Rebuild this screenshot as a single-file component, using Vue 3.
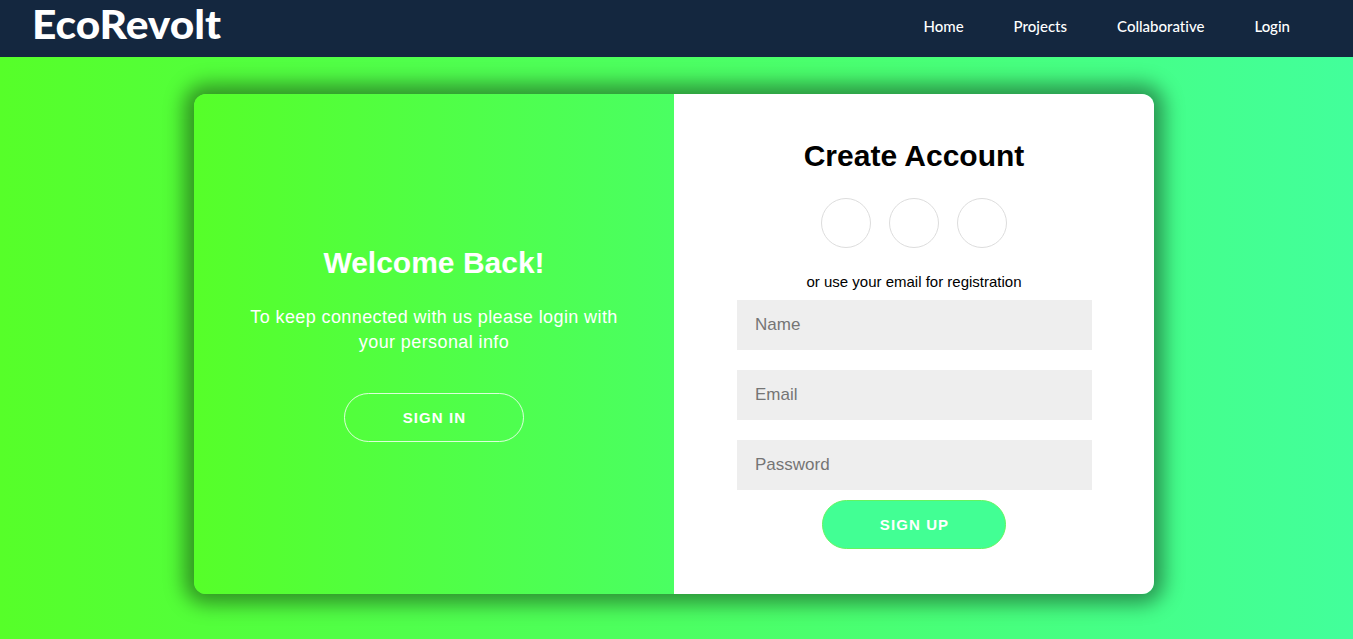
<script setup>
const links = ['Home', 'Projects', 'Collaborative', 'Login']
const fields = [['text', 'Name'], ['email', 'Email'], ['password', 'Password']]
</script>

<template>
  <div class="page">
    <header class="nav">
      <svg class="logo" width="230" height="57"><text x="32" y="39" textLength="189" lengthAdjust="spacingAndGlyphs">EcoRevolt</text></svg>
      <nav class="links"><a v-for="l in links" :key="l">{{ l }}</a></nav>
    </header>
    <main class="stage">
      <div class="card">
        <section class="welcome">
          <h1>Welcome Back!</h1>
          <p>To keep connected with us please login with<br />your personal info</p>
          <button class="btn ghost">SIGN IN</button>
        </section>
        <section class="signup">
          <h1>Create Account</h1>
          <div class="social"><i v-for="n in 3" :key="n"></i></div>
          <span class="hint">or use your email for registration</span>
          <div class="fields"><input v-for="f in fields" :key="f[1]" :type="f[0]" :placeholder="f[1]" /></div>
          <button class="btn solid">SIGN UP</button>
        </section>
      </div>
    </main>
  </div>
</template>

<style>
body { margin: 0; overflow: hidden; }
</style>
<style scoped>
* { box-sizing: border-box; }
.page { height: 639px; display: flex; flex-direction: column; background: linear-gradient(to right, #56ff29, #42ff9b); font-family: "Liberation Sans", Arial, sans-serif; }
.nav { height: 57px; background: #14273f; display: flex; justify-content: space-between; }
.logo text { font: 900 39px Lato, sans-serif; fill: #fff; }
.links { display: flex; gap: 50px; margin-right: 63px; color: #fff; font: 500 15px/52px Lato, sans-serif; font-variant-ligatures: none; }
.stage { padding: 37px 0 0 194px; }
.card { width: 960px; height: 500px; display: flex; border-radius: 12px; overflow: hidden; box-shadow: 0 0 20px 10px rgba(0,0,0,.42); }
section { width: 480px; display: flex; flex-direction: column; align-items: center; }
.welcome { color: #fff; background: linear-gradient(to right, #56ff29, #4aff62); padding-top: 151px; }
h1 { margin: 0; font-size: 30px; line-height: 36px; }
.welcome p { margin: 24px 0 0; font-size: 18px; line-height: 25px; letter-spacing: .4px; text-align: center; }
.btn { height: 49px; border-radius: 25px; color: #fff; font: 700 15px "Liberation Sans", Arial, sans-serif; letter-spacing: 1.1px; padding: 0 0 1px 1px; }
.ghost { margin-top: 38px; width: 180px; background: transparent; border: 1px solid rgba(255,255,255,.8); }
.signup { background: #fff; color: #000; padding-top: 44px; }
.social { display: flex; gap: 18px; margin-top: 24px; }
.social i { width: 50px; height: 50px; border: 1px solid #ddd; border-radius: 50%; }
.hint { font-size: 15px; line-height: 18px; margin-top: 25px; }
.fields { display: flex; flex-direction: column; gap: 20px; margin-top: 9px; }
input { width: 355px; height: 50px; border: 0; background: #eee; padding: 0 18.5px; font: 17px "Liberation Sans", Arial, sans-serif; }
input::placeholder { color: #757575; }
.solid { width: 184px; margin-top: 10px; background: #42ff94; border: 1px solid #64f560; }
</style>
